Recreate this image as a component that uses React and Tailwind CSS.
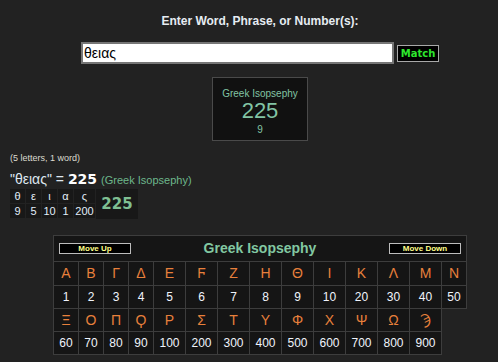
import React from 'react';

const row1 = [
  ['Α', 1], ['Β', 2], ['Γ', 3], ['Δ', 4], ['Ε', 5], ['Ϝ', 6], ['Ζ', 7],
  ['Η', 8], ['Θ', 9], ['Ι', 10], ['Κ', 20], ['Λ', 30], ['Μ', 40], ['Ν', 50],
];
const row2 = [
  ['Ξ', 60], ['Ο', 70], ['Π', 80], ['Ϙ', 90], ['Ρ', 100], ['Σ', 200], ['Τ', 300],
  ['Υ', 400], ['Φ', 500], ['Χ', 600], ['Ψ', 700], ['Ω', 800], ['Ϡ', 900],
];
const word = [['θ', 9], ['ε', 5], ['ι', 10], ['α', 1], ['ς', 200]];

const cell = 'border-r border-b border-[#3d3d3d] bg-[#151515] flex items-center justify-center';

const App = () => {
  return (
    <div className="w-full h-[362px] overflow-hidden bg-[#222222] font-['Liberation_Sans',Arial,sans-serif]">
      {/* search block */}
      <div className="pl-[22px] flex flex-col items-center">
        <div className="pt-[14px] text-[12px] leading-[14px] font-bold text-[#e6ecf2]">
          Enter Word, Phrase, or Number(s):
        </div>

        <div className="mt-[14px] flex items-center gap-[3px]">
          <div className="w-[313px] h-[22px] bg-white border-2 border-[#767676] flex items-center pl-[1px] text-[14px] text-black">
            θειας
          </div>
          <div className="w-[42px] h-[17px] bg-black border border-[#a8a8a8] flex items-center justify-center font-['DejaVu_Sans',sans-serif] font-bold text-[10px] text-[#2ee62e]">
            Match
          </div>
        </div>

        <div className="mt-[13px] w-[96px] h-[64px] bg-[#111111] border border-[#4a4a4a] flex flex-col items-center pt-[10px] text-[#82c4a4]">
          <div className="text-[10px] leading-[12px]">Greek Isopsephy</div>
          <div className="text-[22px] leading-[22px]">225</div>
          <div className="mt-[2px] text-[10px] leading-[12px]">9</div>
        </div>
      </div>

      {/* result */}
      <div className="pl-[10px]">
        <div className="mt-[11px] text-[9px] leading-[12px] text-[#dcdcd0]">(5 letters, 1 word)</div>
        <div className="mt-[5px] h-[20px] leading-[20px] flex items-baseline whitespace-nowrap">
          <span className="text-[14px] text-[#dfe7f0]">"θειας" =&nbsp;</span>
          <span className="font-['DejaVu_Sans',sans-serif] font-bold text-[14px] text-white">225</span>
          <span className="ml-[4px] text-[11px] text-[#6db78c]">(Greek Isopsephy)</span>
        </div>

        <div className="flex">
          <div className="flex bg-[#222222]">
            <div className="grid grid-cols-[16px_16px_16px_16px_22px] grid-rows-[15px_15px] grid-flow-col">
              {word.map(([l, v]) => (
                <React.Fragment key={l}>
                  <div className="bg-[#181818] border-r border-b border-[#222222] flex items-center justify-center text-[11px] text-[#e2eefa]">{l}</div>
                  <div className="bg-[#181818] border-r border-b border-[#222222] flex items-center justify-center text-[11px] text-[#e2eefa]">{v}</div>
                </React.Fragment>
              ))}
            </div>
            <div className="w-[42px] h-[30px] bg-[#181818] flex items-center justify-center font-['DejaVu_Sans',sans-serif] font-bold text-[15px] text-[#7fbf92]">
              225
            </div>
          </div>
        </div>
      </div>

      {/* letter chart */}
      <div className="mt-[16px] ml-[53px] w-[414px] border-l border-t border-[#3d3d3d] grid grid-cols-[25px_25px_25px_25px_repeat(9,32px)_25px] grid-rows-[26px_24px_23px_23px_23px]">
        <div className="col-span-14 border-r border-b border-[#3d3d3d] bg-[#151515] flex items-center justify-between px-[5px]">
          <div className="w-[72px] h-[11px] bg-black border border-[#bdbdbd] flex items-center justify-center text-[8px] font-bold text-[#ffff88]">
            Move Up
          </div>
          <div className="text-[14px] font-bold text-[#82c8a2]">Greek Isopsephy</div>
          <div className="w-[72px] h-[11px] bg-black border border-[#bdbdbd] flex items-center justify-center text-[8px] font-bold text-[#ffff88]">
            Move Down
          </div>
        </div>

        {row1.map(([l]) => (
          <div key={'a' + l} className={`${cell} text-[14px] text-[#e8803c]`}>{l}</div>
        ))}
        {row1.map(([l, v]) => (
          <div key={'b' + l} className={`${cell} text-[12px] text-[#f0f4fc]`}>{v}</div>
        ))}
        {row2.map(([l]) => (
          <div key={'c' + l} className={`${cell} text-[14px] text-[#e8803c]`}>{l}</div>
        ))}
        <div />
        {row2.map(([l, v]) => (
          <div key={'d' + l} className={`${cell} text-[12px] text-[#f0f4fc]`}>{v}</div>
        ))}
        <div />
      </div>
    </div>
  );
};

export default App;
